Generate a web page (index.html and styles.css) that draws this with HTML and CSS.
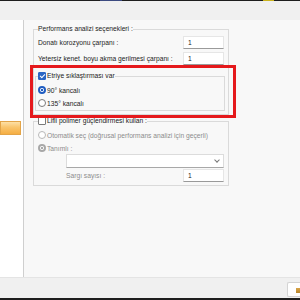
FILE: index.html
```html
<!DOCTYPE html>
<html>
<head>
  <meta charset="UTF-8">
  <title>Performans analizi</title>
  <link rel="stylesheet" href="styles.css">
</head>
<body>
  <div class="topline"></div>
  <div class="toolbar"></div>
  <div class="main">
    <div class="sidebar">
      <div class="orange-btn"></div>
    </div>
    <div class="content">
      <fieldset class="group">
        <legend>Performans analizi seçenekleri :</legend>
        <div class="row first">
          <span>Donatı korozyonu çarpanı :</span>
          <div class="field">1</div>
        </div>
        <div class="row">
          <span>Yetersiz kenet. boyu akma gerilmesi çarpanı :</span>
          <div class="field">1</div>
        </div>
        <fieldset class="group inner">
          <legend><span class="check on"></span>Etriye sıklaştırması var</legend>
          <div class="opt first"><span class="radio on"></span>90° kancalı</div>
          <div class="opt"><span class="radio"></span>135° kancalı</div>
        </fieldset>
      </fieldset>
      <fieldset class="group lifli">
        <legend><span class="check"></span>Lifli polimer güçlendirmesi kullan :</legend>
        <div class="opt off first"><span class="radio"></span>Otomatik seç (doğrusal performans analizi için geçerli)</div>
        <div class="opt off"><span class="radio on"></span>Tanımlı :</div>
        <div class="select"><span class="chev"></span></div>
        <div class="row sub">
          <span class="dim">Sargı sayısı :</span>
          <div class="field">1</div>
        </div>
      </fieldset>
      <div class="highlight"></div>
    </div>
  </div>
  <div class="statusbar">
    <div class="status-btn"><span class="status-icon"></span></div>
  </div>
  <div class="bottomline"></div>
</body>
</html>
```

FILE: styles.css
```css
html, body {
  margin: 0;
  padding: 0;
}
body {
  width: 300px;
  height: 300px;
  overflow: hidden;
  font-family: "Liberation Sans", Arial, sans-serif;
  font-size: 6.7px;
  color: #1c1c1c;
  background: #f0f0f0;
}
.topline {
  height: 1px;
  background: linear-gradient(to right, #1d1d1d 0, #1d1d1d 100px, #3c4a80 100px, #3c4a80 122px, #1d1d1d 122px, #1d1d1d 263px, #c9b21c 263px, #c9b21c 274px, #1d1d1d 274px);
}
.toolbar {
  height: 19px;
  background: #f0f0f0;
}
.main {
  display: flex;
  height: 257px;
}
.sidebar {
  width: 24px;
  background: #fff;
  border-right: 1px solid #cfcfcf;
  padding-top: 101px;
  box-sizing: border-box;
}
.orange-btn {
  width: 21px;
  height: 14px;
  box-sizing: border-box;
  border: 1px solid #e3a448;
  background: linear-gradient(#fde0a6, #f9c46c 45%, #f5ae43);
}
.content {
  flex: 1;
  position: relative;
  background: #f8f8f8;
  padding-top: 5px;
}
.group {
  margin: 0 0 0 9px;
  width: 196px;
  box-sizing: border-box;
  border: 1px solid #dadada;
  padding: 0 4px 3px 4px;
}
.group legend {
  padding: 0;
  line-height: 8px;
  height: 8px;
  display: flex;
  align-items: center;
}
.row {
  display: flex;
  justify-content: space-between;
  align-items: center;
  height: 13px;
  margin-top: 3px;
}
.row.first {
  margin-top: 3px;
}
.field {
  width: 41px;
  height: 13px;
  box-sizing: border-box;
  background: #fff;
  border: 1px solid #e6e6e6;
  border-bottom-color: #9a9a9a;
  padding-left: 4px;
  line-height: 11px;
}
.inner {
  margin: 7px -1px 0 -3px;
  width: auto;
  padding: 0 2px 3px 2px;
}
.opt {
  display: flex;
  align-items: center;
  height: 8px;
  margin-top: 5px;
}
.opt.first {
  margin-top: 6px;
}
.off {
  color: #8c8c8c;
}
.dim {
  color: #8c8c8c;
}
.check {
  width: 8px;
  height: 8px;
  box-sizing: border-box;
  border: 1px solid #7a7a7a;
  border-radius: 1px;
  background: #fff;
  margin-right: 1px;
  position: relative;
}
.check.on {
  background: #2b66c4;
  border-color: #2b66c4;
}
.check.on::after {
  content: "";
  position: absolute;
  left: 2px;
  top: 0px;
  width: 2px;
  height: 4px;
  border: solid #fff;
  border-width: 0 1px 1px 0;
  transform: rotate(45deg);
}
.radio {
  width: 8px;
  height: 8px;
  box-sizing: border-box;
  border: 1px solid #7a7a7a;
  border-radius: 50%;
  background: #fff;
  margin-right: 1px;
}
.radio.on {
  border: 2px solid #1f5cc0;
  background: radial-gradient(circle, #1f5cc0 0, #1f5cc0 1px, #fff 1.5px);
}
.off .radio {
  border-color: #b8b8b8;
}
.off .radio.on {
  border: 2px solid #a8a8a8;
  background: radial-gradient(circle, #a8a8a8 0, #a8a8a8 1px, #fff 1.5px);
}
.lifli {
  margin-top: 2px;
}
.select {
  margin: 2px 0 0 28px;
  height: 14px;
  box-sizing: border-box;
  background: #fff;
  border: 1px solid #dcdcdc;
  border-bottom-color: #a8a8a8;
  position: relative;
}
.chev {
  position: absolute;
  right: 4px;
  top: 3px;
  width: 3px;
  height: 3px;
  border: solid #777;
  border-width: 0 1px 1px 0;
  transform: rotate(45deg);
}
.row.sub {
  margin-top: 1px;
  padding-left: 28px;
}
.highlight {
  position: absolute;
  left: 6px;
  top: 45px;
  width: 206px;
  height: 53px;
  box-sizing: border-box;
  border: 3px solid #e5191c;
}
.statusbar {
  height: 21px;
  background: #f0f0f0;
  border-top: 1px solid #e4e4e4;
  box-sizing: border-box;
  display: flex;
  justify-content: flex-end;
  align-items: flex-end;
}
.status-btn {
  width: 13px;
  height: 15px;
  margin-bottom: 1px;
  box-sizing: border-box;
  background: #fff;
  border: 1px solid #d4d4d4;
  border-right: none;
  border-radius: 2px 0 0 2px;
  padding: 5px 0 0 8px;
}
.status-icon {
  display: block;
  width: 4px;
  height: 5px;
  background: linear-gradient(#d9a54a, #b7842a);
}
.bottomline {
  height: 2px;
  background: #1e1e1e;
}
```
